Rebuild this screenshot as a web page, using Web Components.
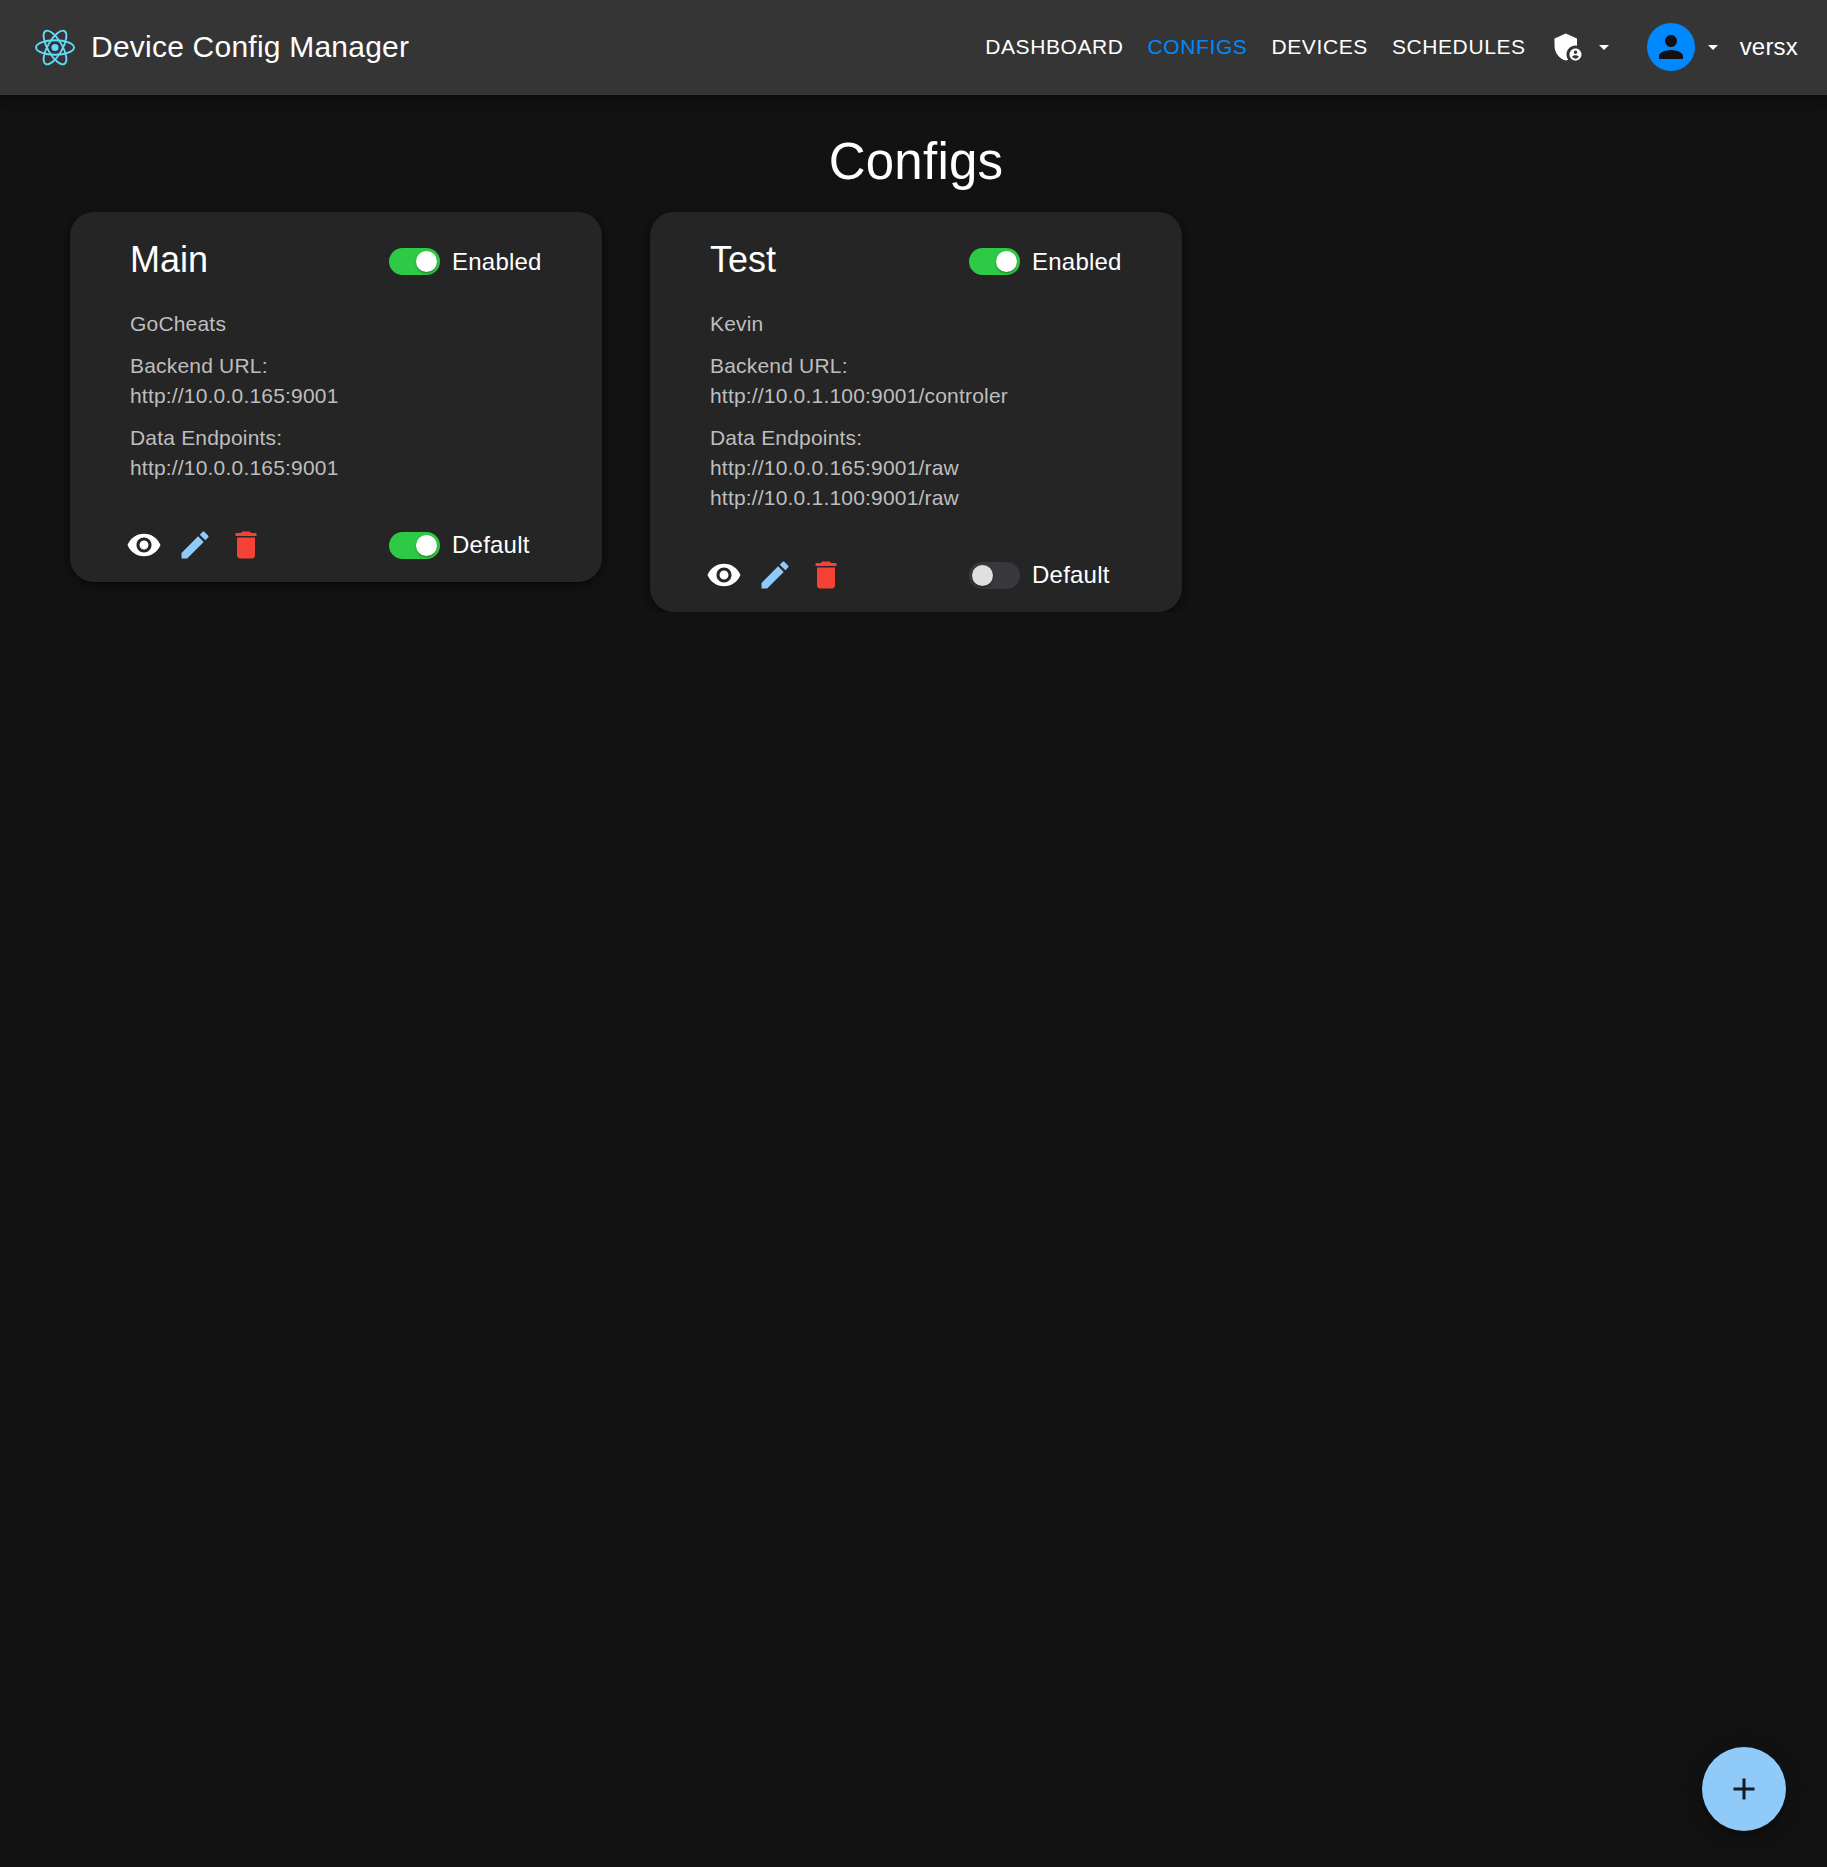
<!DOCTYPE html>
<html lang="en">
<head>
<meta charset="utf-8">
<title>Device Config Manager</title>
<style>
html,body{margin:0;background:#121212;color:#fff;font-family:"Liberation Sans",Arial,sans-serif}
</style>
</head>
<body>
<dcm-app></dcm-app>
<script>
const ICONS = {
  admin: '<path d="M17 11c.34 0 .67.04 1 .09V6.27L10.5 3 3 6.27v4.91c0 4.54 3.2 8.79 7.5 9.82.55-.13 1.08-.32 1.6-.55-.69-.98-1.1-2.17-1.1-3.45 0-3.31 2.69-6 6-6z"/><path d="M17 13c-2.21 0-4 1.79-4 4s1.790 4 4 4 4-1.790 4-4-1.790-4-4-4zm0 1.380c.62 0 1.120.51 1.120 1.120s-.51 1.120-1.120 1.120-1.120-.51-1.120-1.120.5-1.120 1.120-1.120zm0 5.370c-.93 0-1.740-.46-2.240-1.170.05-.72 1.510-1.080 2.240-1.080s2.190.36 2.240 1.080c-.5.710-1.310 1.170-2.240 1.170z"/>',
  caret: '<path d="m7 10 5 5 5-5z"/>',
  person: '<path d="M12 12c2.21 0 4-1.790 4-4s-1.790-4-4-4-4 1.790-4 4 1.790 4 4 4zm0 2c-2.670 0-8 1.340-8 4v2h16v-2c0-2.660-5.330-4-8-4z"/>',
  view: '<path d="M12 4.500C7 4.500 2.730 7.610 1 12c1.730 4.390 6 7.500 11 7.500s9.270-3.110 11-7.500c-1.730-4.390-6-7.500-11-7.500zM12 17c-2.760 0-5-2.240-5-5s2.240-5 5-5 5 2.240 5 5-2.240 5-5 5zm0-8c-1.660 0-3 1.340-3 3s1.340 3 3 3 3-1.340 3-3-1.340-3-3-3z"/>',
  edit: '<path d="M3 17.250V21h3.750L17.810 9.940l-3.750-3.750L3 17.250zM20.710 7.040c.39-.39.39-1.020 0-1.410l-2.340-2.340c-.39-.39-1.020-.39-1.410 0l-1.830 1.830 3.750 3.750 1.830-1.830z"/>',
  trash: '<path d="M6 19c0 1.100.9 2 2 2h8c1.100 0 2-.9 2-2V7H6v12zM19 4h-3.500l-1-1h-5l-1 1H5v2h14V4z"/>',
  add: '<path d="M19 13h-6v6h-2v-6H5v-2h6V5h2v6h6v2z"/>'
};

class El extends HTMLElement {
  connectedCallback() {
    this.attachShadow({mode:'open'}).innerHTML = this.view();
  }
}

customElements.define('dcm-icon', class extends El {
  view() {
    return `<style>:host{display:block;flex:none;width:36px;height:36px}svg{display:block;width:100%;height:100%;fill:currentColor}</style>
    <svg viewBox="0 0 24 24">${ICONS[this.getAttribute('name')]}</svg>`;
  }
});

customElements.define('dcm-logo', class extends El {
  view() {
    return `<style>:host{display:block;flex:none;width:40px;height:37px}svg{display:block;width:100%;height:100%}</style>
    <svg viewBox="-11.6 -10.6 23.2 21.2"><circle r="2.05" fill="#61dafb"/><g fill="none" stroke="#61dafb" stroke-width="1.1"><ellipse rx="11" ry="4.2"/><ellipse rx="11" ry="4.2" transform="rotate(60)"/><ellipse rx="11" ry="4.2" transform="rotate(120)"/></g></svg>`;
  }
});

customElements.define('dcm-link', class extends El {
  view() {
    return `<style>:host{display:block;font-size:21px;line-height:36px;letter-spacing:.6px;text-transform:uppercase}:host([active]){color:#0088ff}</style><slot></slot>`;
  }
});

customElements.define('dcm-header', class extends El {
  view() {
    return `<style>
    :host{display:flex;align-items:center;box-sizing:border-box;height:95px;padding:0 29px 1px 35px;background:#353535;box-shadow:0 3px 6px -1px rgba(0,0,0,.2),0 6px 8px rgba(0,0,0,.14),0 2px 15px rgba(0,0,0,.12)}
    .title{font-size:30px;line-height:48px;letter-spacing:.225px;margin-left:16px;flex:1}
    nav{display:flex;gap:24px}
    .admin{margin-left:24px}
    .caret{margin-left:6px;width:24px;height:24px}
    .avatar{display:flex;align-items:center;justify-content:center;width:48px;height:48px;border-radius:50%;background:#08f;color:#121212;margin-left:31px}
    .user{font-size:24px;line-height:36px;letter-spacing:.2px;margin-left:15px}
    </style>
    <dcm-logo></dcm-logo><div class="title">Device Config Manager</div>
    <nav><dcm-link>Dashboard</dcm-link><dcm-link active>Configs</dcm-link><dcm-link>Devices</dcm-link><dcm-link>Schedules</dcm-link></nav>
    <dcm-icon class="admin" name="admin"></dcm-icon><dcm-icon class="caret" name="caret"></dcm-icon>
    <div class="avatar"><dcm-icon name="person"></dcm-icon></div>
    <dcm-icon class="caret" name="caret"></dcm-icon>
    <div class="user">versx</div>`;
  }
});

customElements.define('dcm-switch', class extends El {
  view() {
    return `<style>
    :host{display:flex;align-items:center;width:153px;font-size:24px;line-height:36px;letter-spacing:.225px;gap:12px}
    .track{display:flex;box-sizing:border-box;flex:none;width:51px;height:27px;padding:3px;border-radius:14px;background:#39393d}
    .knob{width:21px;height:21px;border-radius:50%;background:#e0e0e0;box-shadow:0 2px 2px -1px rgba(0,0,0,.3),0 1px 3px rgba(0,0,0,.2)}
    :host([on]) .track{background:#2eca45;justify-content:flex-end}
    :host([on]) .knob{background:#fff}
    </style><div class="track"><div class="knob"></div></div><slot></slot>`;
  }
});

customElements.define('dcm-card', class extends El {
  view() {
    return `<style>
    :host{display:block;box-sizing:border-box;padding:24px 60px 18px;border-radius:24px;background:#252525;box-shadow:0 3px 4px -2px rgba(0,0,0,.3),0 3px 6px rgba(0,0,0,.2),0 2px 10px rgba(0,0,0,.14)}
    .head,.foot{display:flex;align-items:center;justify-content:space-between}
    h2{margin:0;font-weight:400;font-size:36px;line-height:48px}
    .head{height:48px}
    .head dcm-switch{padding-top:3px}
    .body{margin-top:25px;color:#bebebe;font-size:21px;line-height:30px;letter-spacing:.19px}
    .foot{height:38px;margin-top:43px}
    .acts{display:flex;gap:15px;margin-left:-4px}
    </style>
    <div class="head"><h2>${this.getAttribute('name')}</h2><dcm-switch on>Enabled</dcm-switch></div>
    <div class="body"><slot></slot></div>
    <div class="foot"><div class="acts"><dcm-icon name="view"></dcm-icon><dcm-icon name="edit" style="color:#90caf9"></dcm-icon><dcm-icon name="trash" style="color:#f44336"></dcm-icon></div>
    <dcm-switch ${this.hasAttribute('default') ? 'on' : ''}>Default</dcm-switch></div>`;
  }
});

customElements.define('dcm-field', class extends El {
  view() {
    return `<style>:host{display:block;margin-bottom:12px}::slotted(*){display:block}</style><slot></slot>`;
  }
});

customElements.define('dcm-fab', class extends El {
  view() {
    return `<style>:host{position:fixed;right:41px;bottom:36px;width:84px;height:84px;border-radius:50%;background:#90caf9;color:rgba(0,0,0,.87);display:flex;align-items:center;justify-content:center;box-shadow:0 5px 8px -2px rgba(0,0,0,.2),0 9px 15px rgba(0,0,0,.14),0 2px 27px rgba(0,0,0,.12)}</style><dcm-icon name="add"></dcm-icon>`;
  }
});

customElements.define('dcm-app', class extends El {
  view() {
    return `<style>
    :host{display:block}
    h1{margin:35px 0 0;font-weight:400;font-size:51px;line-height:63px;letter-spacing:.25px;text-align:center}
    main{padding:0 65px 0 70px}
    .grid{display:grid;grid-template-columns:repeat(3,1fr);gap:48px;align-items:start;margin-top:19px}
    </style>
    <dcm-header></dcm-header>
    <main><h1>Configs</h1>
    <div class="grid">
      <dcm-card name="Main" default>
        <dcm-field><span>GoCheats</span></dcm-field>
        <dcm-field><span>Backend URL:</span><span>http://10.0.0.165:9001</span></dcm-field>
        <dcm-field><span>Data Endpoints:</span><span>http://10.0.0.165:9001</span></dcm-field>
      </dcm-card>
      <dcm-card name="Test">
        <dcm-field><span>Kevin</span></dcm-field>
        <dcm-field><span>Backend URL:</span><span>http://10.0.1.100:9001/controler</span></dcm-field>
        <dcm-field><span>Data Endpoints:</span><span>http://10.0.0.165:9001/raw</span><span>http://10.0.1.100:9001/raw</span></dcm-field>
      </dcm-card>
    </div></main>
    <dcm-fab></dcm-fab>`;
  }
});
</script>
</body>
</html>
